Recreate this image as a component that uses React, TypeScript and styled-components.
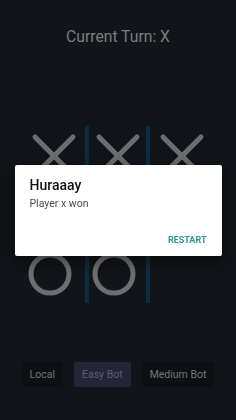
import React from "react";
import styled, { createGlobalStyle } from "styled-components";

const Global = createGlobalStyle`
  html, body { margin: 0; padding: 0; background: #111418; }
  body { font-family: Roboto, "Noto Sans", Arial, sans-serif; }
`;

const Screen = styled.div`
  width: 236px;
  height: 420px;
  background: #111418;
  display: flex;
  flex-direction: column;
  align-items: center;
  overflow: hidden;
`;

const Title = styled.div`
  margin-top: 28px;
  font-size: 15.7px;
  line-height: 18px;
  color: #7c7e81;
`;

const Board = styled.div`
  margin-top: 80px;
  display: grid;
  grid-template-columns: 63px 65px 64px;
  grid-template-rows: repeat(3, 59px);
  width: 192px;
`;

const Cell = styled.div<{ $mid?: boolean }>`
  display: flex;
  align-items: center;
  justify-content: center;
  box-sizing: border-box;
  ${(p) =>
    p.$mid
      ? `border-left: 4px solid #0e2b41; border-right: 4px solid #0e2b41;`
      : ""}
`;

const Modes = styled.div`
  margin-top: 59px;
  display: flex;
  gap: 11px;
`;

const ModeButton = styled.div<{ $active?: boolean }>`
  height: 25px;
  padding: 0 8px;
  display: flex;
  align-items: center;
  font-size: 10.5px;
  color: ${(p) => (p.$active ? "#5d5f72" : "#727477")};
  background: ${(p) => (p.$active ? "#242539" : "#0d1013")};
  border-radius: 2px;
`;

const Overlay = styled.div`
  position: fixed;
  inset: 0;
  display: flex;
  align-items: center;
  justify-content: center;
`;

const Dialog = styled.div`
  width: 207px;
  height: 91px;
  box-sizing: border-box;
  background: #ffffff;
  border-radius: 2px;
  box-shadow: 0 4px 14px rgba(0, 0, 0, 0.5);
  padding: 12px 15px 0 15px;
  display: flex;
  flex-direction: column;
`;

const DialogTitle = styled.div`
  font-size: 14px;
  line-height: 16px;
  color: #111;
  font-weight: 500;
`;

const DialogBody = styled.div`
  margin-top: 4px;
  font-size: 10.5px;
  line-height: 13px;
  color: #4a4a4a;
`;

const Actions = styled.div`
  margin-top: auto;
  margin-bottom: 11px;
  display: flex;
  justify-content: flex-end;
`;

const ActionButton = styled.div`
  font-size: 9px;
  font-weight: 700;
  color: #2f9a8e;
`;

const Mark = ({ v }: { v: string }) => {
  if (v === "x")
    return (
      <svg width="46" height="46" viewBox="0 0 46 46">
        <g stroke="#6d6e70" strokeWidth="5" strokeLinecap="round">
          <line x1="4" y1="4" x2="42" y2="42" />
          <line x1="42" y1="4" x2="4" y2="42" />
        </g>
      </svg>
    );
  if (v === "o")
    return (
      <svg width="46" height="46" viewBox="0 0 46 46" style={{ marginLeft: "-8px" }}>
        <circle cx="23" cy="23" r="19" fill="none" stroke="#6d6e70" strokeWidth="5" />
      </svg>
    );
  return null;
};

const cells = ["x", "x", "x", "", "", "", "o", "o", ""];

export default function App() {
  return (
    <>
      <Global />
      <Screen>
        <Title>Current Turn: X</Title>
        <Board>
          {cells.map((c, i) => (
            <Cell key={i} $mid={i % 3 === 1}>
              <Mark v={c} />
            </Cell>
          ))}
        </Board>
        <Modes>
          <ModeButton>Local</ModeButton>
          <ModeButton $active>Easy Bot</ModeButton>
          <ModeButton>Medium Bot</ModeButton>
        </Modes>
      </Screen>
      <Overlay>
        <Dialog>
          <DialogTitle>Huraaay</DialogTitle>
          <DialogBody>Player x won</DialogBody>
          <Actions>
            <ActionButton>RESTART</ActionButton>
          </Actions>
        </Dialog>
      </Overlay>
    </>
  );
}
